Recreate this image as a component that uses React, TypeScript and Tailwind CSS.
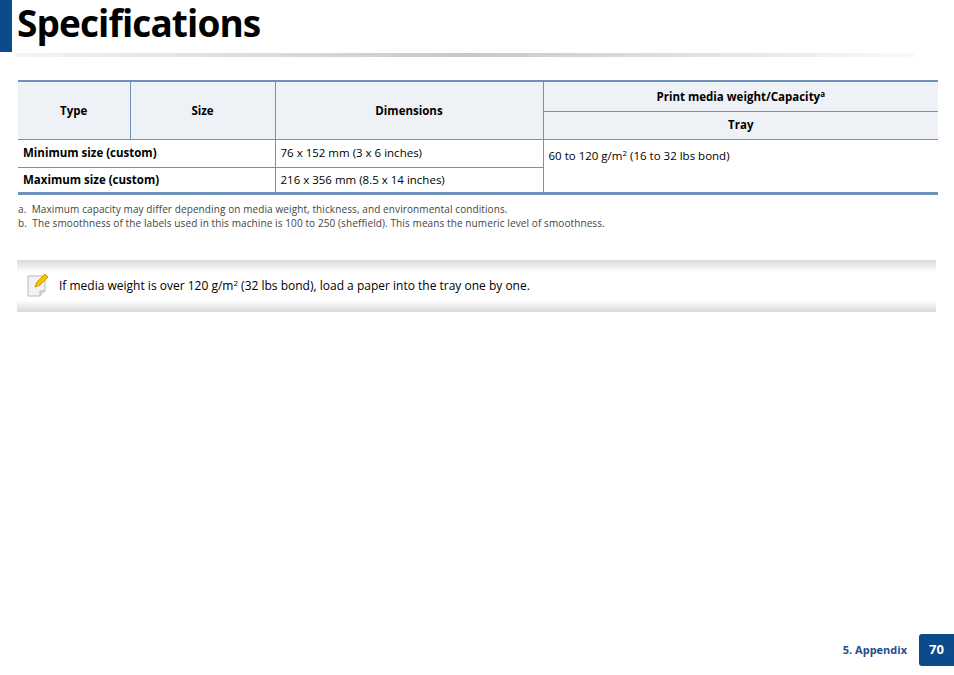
export default function App() {
  const f = { fontFamily: '"Open Sans", "Liberation Sans", sans-serif' };
  const bd = "border-[#6e92bb]";
  return (
    <div className="relative w-[954px] h-[675px] bg-white overflow-hidden text-black" style={f}>
      <div className="flex h-[53px]">
        <div className="w-[12px] h-[52px] bg-[#0b4a8b]" />
        <h1 className="ml-[5px] text-[37px] leading-[46px] font-bold tracking-[-0.9px]">Specifications</h1>
      </div>
      <div className="ml-[15px] w-[900px] h-[4px] bg-gradient-to-r from-[#f4f4f4] via-[#c8c8c8] to-[#fafafa] rounded-full" />
      <div className="ml-[18px] mt-[23px] w-[920px]">
        <table className="w-full border-collapse text-[11.5px] border-t-2 border-b-[3px] border-[#6e92bb]">
          <colgroup>
            <col className="w-[112px]" /><col className="w-[145px]" /><col className="w-[268px]" /><col />
          </colgroup>
          <tbody>
            <tr className="h-[30px] bg-[#eef2f7]">
              <th rowSpan={2} className={`font-bold text-center border-r ${bd}`}>Type</th>
              <th rowSpan={2} className={`font-bold text-center border-r ${bd}`}>Size</th>
              <th rowSpan={2} className={`font-bold text-center border-r ${bd}`}>Dimensions</th>
              <th className={`font-bold text-center border-b ${bd}`}>Print media weight/Capacity<sup className="text-[8px]">a</sup></th>
            </tr>
            <tr className="h-[28px] bg-[#eef2f7]">
              <th className="font-bold text-center">Tray</th>
            </tr>
            <tr className={`h-[28px] border-t ${bd}`}>
              <td colSpan={2} className={`font-bold px-[5px] border-r ${bd}`}>Minimum size (custom)</td>
              <td className={`px-[5px] border-r ${bd}`}>76 x 152 mm (3 x 6 inches)</td>
              <td rowSpan={2} className="px-[5px] align-top pt-[7px]">60 to 120 g/m<sup className="text-[8px]">2</sup> (16 to 32 lbs bond)</td>
            </tr>
            <tr className={`h-[26px] border-t ${bd}`}>
              <td colSpan={2} className={`font-bold px-[5px] border-r ${bd}`}>Maximum size (custom)</td>
              <td className={`px-[5px] border-r ${bd}`}>216 x 356 mm (8.5 x 14 inches)</td>
            </tr>
          </tbody>
        </table>
        <div className="mt-[7px] text-[10px] leading-[14px] text-[#444] tracking-[0.1px]">
          <p>a.&nbsp; Maximum capacity may differ depending on media weight, thickness, and environmental conditions.</p>
          <p>b.&nbsp; The smoothness of the labels used in this machine is 100 to 250 (sheffield). This means the numeric level of smoothness.</p>
        </div>
      </div>
      <div className="ml-[17px] mt-[30px] w-[919px]">
        <div className="h-[12px] bg-gradient-to-b from-[#d9d9d9] to-white" />
        <div className="flex items-center h-[28px] text-[12px]">
          <svg width="26" height="26" viewBox="0 0 26 26" className="ml-[8px] mr-[8px]">
            <path d="M3 3h17v15l-5 5H3z" fill="#f2f2f2" stroke="#bbb" />
            <path d="M15 23v-5h5" fill="#ddd" stroke="#bbb" />
            <path d="M10 14l2-5 8-8 3 3-8 8z" fill="#f5c400" stroke="#c79a00" />
          </svg>
          <span>If media weight is over 120 g/m<sup className="text-[8px]">2</sup> (32 lbs bond), load a paper into the tray one by one.</span>
        </div>
        <div className="h-[12px] bg-gradient-to-t from-[#d9d9d9] to-white" />
      </div>
      <div className="absolute right-0 top-[634px] flex items-center">
        <span className="text-[11px] font-bold text-[#1f4e8c] mr-[12px]">5. Appendix</span>
        <div className="w-[35px] h-[32px] bg-[#0b4a8b] rounded-l-[3px] flex items-center justify-center text-white text-[13px] font-bold">70</div>
      </div>
    </div>
  );
}
